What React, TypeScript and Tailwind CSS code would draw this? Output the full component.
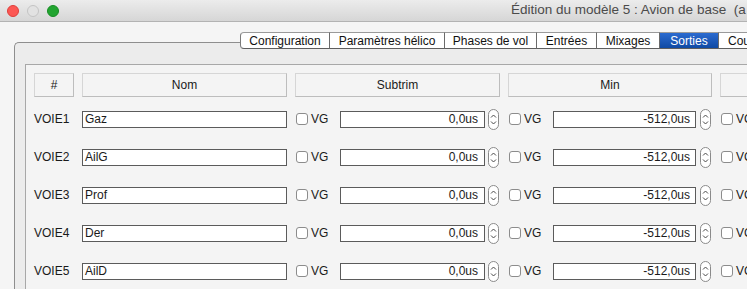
import React from "react";

const tabs = [
  { label: "Configuration", w: "w-[89px]", first: true },
  { label: "Paramètres hélico", w: "w-[115px]" },
  { label: "Phases de vol", w: "w-[92px]" },
  { label: "Entrées", w: "w-[60px]" },
  { label: "Mixages", w: "w-[63px]" },
  { label: "Sorties", w: "w-[59px]", active: true },
  { label: "Courbes", w: "w-[90px]", last: true },
];

const rows = [
  { id: "VOIE1", name: "Gaz" },
  { id: "VOIE2", name: "AilG" },
  { id: "VOIE3", name: "Prof" },
  { id: "VOIE4", name: "Der" },
  { id: "VOIE5", name: "AilD" },
];

function Checkbox() {
  return <div className="w-[12px] h-[12px] ml-[1px] shrink-0 rounded-[3px] border border-[#8c8c8c] bg-white" />;
}

function Spinner() {
  return (
    <svg width="11" height="21" viewBox="0 0 11 21" className="shrink-0">
      <rect x="0.5" y="0.5" width="10" height="20" rx="5" fill="#fff" stroke="#8a8a8a" />
      <path d="M3 8.5 L5.5 6 L8 8.5" fill="none" stroke="#4a4a4a" strokeWidth="1" />
      <path d="M3 12.5 L5.5 15 L8 12.5" fill="none" stroke="#4a4a4a" strokeWidth="1" />
    </svg>
  );
}

function HeaderCell({ children }: { children?: React.ReactNode }) {
  return (
    <div className="h-[24px] flex items-center justify-center bg-[#f4f4f4] border border-[#d6d6d6] border-b-[#bdbdbd] border-r-[#bdbdbd]">
      {children}
    </div>
  );
}

export default function App() {
  return (
    <div className="w-[747px] h-[289px] overflow-hidden bg-[#f5f5f5] font-['Liberation_Sans',Arial,sans-serif] text-[12px] text-[#1a1a1a]">
      {/* Title bar */}
      <div className="h-[22px] flex items-center whitespace-nowrap overflow-hidden border-b border-[#b3b3b3] bg-linear-to-b from-[#ececec] to-[#d6d6d6]">
        <div className="flex items-center gap-[8px] pl-[7px] shrink-0">
          <div className="w-[12px] h-[12px] rounded-full bg-[#fc5753] border border-[#de3f3b]" />
          <div className="w-[12px] h-[12px] rounded-full bg-[#e2e2e2] border border-[#c4c4c4]" />
          <div className="w-[12px] h-[12px] rounded-full bg-[#22a531] border border-[#178d24]" />
        </div>
        <div className="ml-[452px] text-[13.5px] text-[#4b4b4b] shrink-0">
          Édition du modèle 5 : Avion de base&nbsp;&nbsp;(a
        </div>
      </div>

      {/* Tab box */}
      <div className="pl-[14px] pt-[20px]">
        <div className="w-[800px] h-[260px] border-t border-l border-[#8e8e8e] rounded-tl-[5px] bg-[#ececec]">
          <div className="flex -mt-[11px] ml-[225px] h-[17px] whitespace-nowrap">
            {tabs.map((t) => (
              <div
                key={t.label}
                className={`${t.w} shrink-0 flex items-center border-t border-b border-t-[#9a9a9a] border-b-[#5e5e5e] ${
                  t.last ? "justify-start pl-[9px]" : "justify-center"
                } ${
                  t.first ? "border-l border-l-[#7a7a7a] rounded-l-[4px]" : "border-l border-l-[#6a6a6a]"
                } ${
                  t.active
                    ? "bg-linear-to-b from-[#2b6bd0] to-[#0f4aa4] text-white border-l-[#1a4f9a]"
                    : "bg-white text-[#111]"
                }`}
              >
                {t.label}
              </div>
            ))}
          </div>

          {/* Inner scroll frame */}
          <div className="ml-[10px] mt-[15px] h-[300px] border-t border-l border-[#a8a8a8] bg-[#f4f4f4] pl-[8px] pt-[8px]">
            <div className="grid grid-cols-[40px_205px_205px_204px_205px] gap-x-[8px]">
              <HeaderCell>#</HeaderCell>
              <HeaderCell>Nom</HeaderCell>
              <HeaderCell>Subtrim</HeaderCell>
              <HeaderCell>Min</HeaderCell>
              <HeaderCell />
            </div>

            <div className="mt-[3px]">
              {rows.map((r) => (
                <div key={r.id} className="h-[38px] grid grid-cols-[40px_205px_205px_204px_205px] gap-x-[8px] items-center">
                  <div>{r.id}</div>
                  <div className="h-[17px] border border-[#5b5b5b] bg-white pl-[2px] leading-[15px]">{r.name}</div>
                  <div className="flex items-center">
                    <Checkbox />
                    <span className="ml-[3px]">VG</span>
                    <div className="ml-auto w-[145px] h-[17px] border border-[#5b5b5b] bg-white pr-[6px] text-right leading-[15px]">
                      0,0us
                    </div>
                    <div className="ml-[3px] mr-[1px] flex">
                      <Spinner />
                    </div>
                  </div>
                  <div className="flex items-center">
                    <Checkbox />
                    <span className="ml-[3px]">VG</span>
                    <div className="ml-auto w-[143px] h-[17px] border border-[#5b5b5b] bg-white pr-[5px] text-right leading-[15px]">
                      -512,0us
                    </div>
                    <div className="ml-[4px] mr-[1px] flex">
                      <Spinner />
                    </div>
                  </div>
                  <div className="flex items-center">
                    <Checkbox />
                    <span className="ml-[3px]">VG</span>
                  </div>
                </div>
              ))}
            </div>
          </div>
        </div>
      </div>
    </div>
  );
}
